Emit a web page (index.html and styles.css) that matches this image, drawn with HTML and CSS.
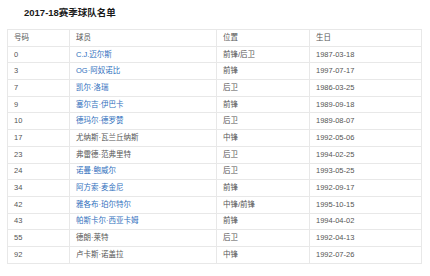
FILE: index.html
```html
<!DOCTYPE html>
<html lang="zh">
<head>
<meta charset="utf-8">
<link rel="stylesheet" href="styles.css">
</head>
<body>
<h1 class="title">2017-18赛季球队名单</h1>
<table class="roster">
  <colgroup>
    <col class="c-num"><col class="c-name"><col class="c-pos"><col class="c-birth">
  </colgroup>
  <thead>
    <tr><td>号码</td><td>球员</td><td>位置</td><td>生日</td></tr>
  </thead>
  <tbody>
    <tr><td>0</td><td><a class="link">C.J.迈尔斯</a></td><td>前锋/后卫</td><td>1987-03-18</td></tr>
    <tr><td>3</td><td><a class="link">OG·阿奴诺比</a></td><td>前锋</td><td>1997-07-17</td></tr>
    <tr><td>7</td><td><a class="link">凯尔·洛瑞</a></td><td>后卫</td><td>1986-03-25</td></tr>
    <tr><td>9</td><td><a class="link">塞尔吉·伊巴卡</a></td><td>前锋</td><td>1989-09-18</td></tr>
    <tr><td>10</td><td><a class="link">德玛尔·德罗赞</a></td><td>后卫</td><td>1989-08-07</td></tr>
    <tr><td>17</td><td>尤纳斯·瓦兰丘纳斯</td><td>中锋</td><td>1992-05-06</td></tr>
    <tr><td>23</td><td>弗雷德·范弗里特</td><td>后卫</td><td>1994-02-25</td></tr>
    <tr><td>24</td><td><a class="link">诺曼·鲍威尔</a></td><td>后卫</td><td>1993-05-25</td></tr>
    <tr><td>34</td><td><a class="link">阿方索·麦金尼</a></td><td>前锋</td><td>1992-09-17</td></tr>
    <tr><td>42</td><td><a class="link">雅各布·珀尔特尔</a></td><td>中锋/前锋</td><td>1995-10-15</td></tr>
    <tr><td>43</td><td><a class="link">帕斯卡尔·西亚卡姆</a></td><td>前锋</td><td>1994-04-02</td></tr>
    <tr><td>55</td><td>德朗·莱特</td><td>后卫</td><td>1992-04-13</td></tr>
    <tr><td>92</td><td>卢卡斯·诺盖拉</td><td>中锋</td><td>1992-07-26</td></tr>
  </tbody>
</table>
</body>
</html>
```

FILE: styles.css
```css
html, body {
  margin: 0;
  padding: 0;
  background: #ffffff;
}
body {
  font-family: "Liberation Sans", "Noto Sans CJK SC", sans-serif;
  color: #555555;
  padding: 7px 9px 0 7px;
}
.title {
  margin: 0 0 11px 17px;
  font-size: 9.5px;
  line-height: 11px;
  font-weight: bold;
  color: #1a1a1a;
}
.roster {
  border-collapse: collapse;
  width: 414px;
  font-size: 7.5px;
  table-layout: fixed;
}
.c-num { width: 62px; }
.c-name { width: 147px; }
.c-pos { width: 93px; }
.c-birth { width: 112px; }
.roster td {
  border: 1px solid #e8e8e8;
  height: 15.7px;
  padding: 0 6px;
  line-height: 10px;
  vertical-align: middle;
  white-space: nowrap;
}
.link {
  color: #2f6fbd;
  text-decoration: none;
}
```
